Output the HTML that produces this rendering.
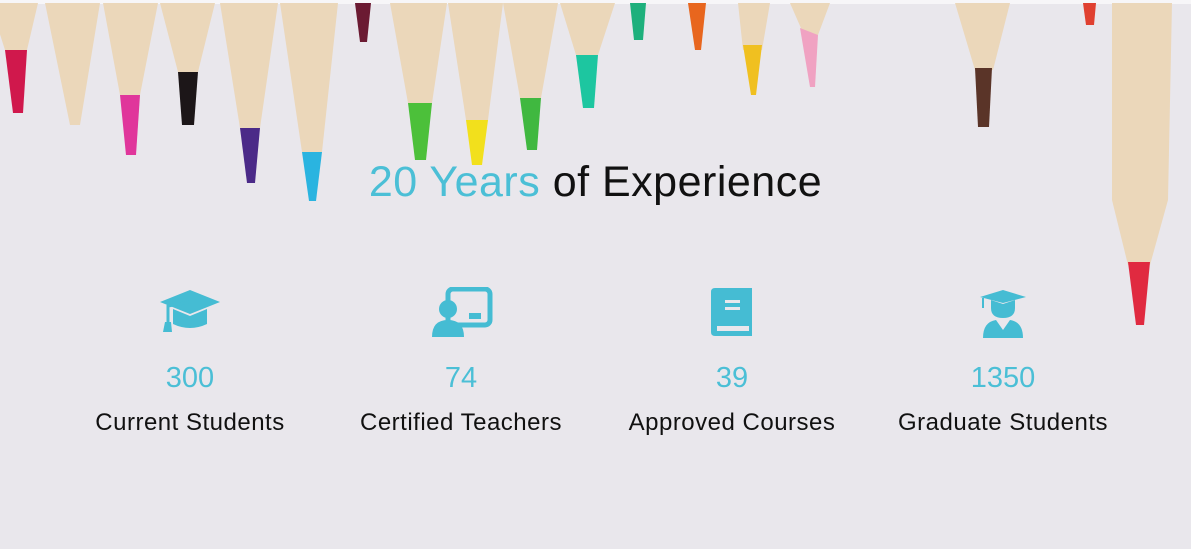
<!DOCTYPE html>
<html><head><meta charset="utf-8"><style>
html,body{margin:0;padding:0}
body{width:1191px;height:549px;background:#e9e7ec;position:relative;overflow:hidden;font-family:"Comic Sans MS","Liberation Sans",sans-serif}
svg.bg{position:absolute;left:0;top:0}
.title{position:absolute;top:158px;left:0;width:1191px;text-align:center;font-size:43px;color:#111;letter-spacing:0.5px}
.title span{color:#4bbfd6}
.col{position:absolute;width:260px;text-align:center}
.num{position:absolute;top:362px;font-size:29px;color:#4bbfd6}
.lab{position:absolute;top:409px;font-size:24px;color:#111;letter-spacing:0.5px}
.ic{position:absolute;top:286px}
</style></head><body>
<svg class="bg" width="1191" height="549" viewBox="0 0 1191 549">
<rect x="0" y="0" width="1191" height="4" fill="#f7f6f8"/>
<g fill="#ebd7ba">
<polygon points="-10,3 38,3 27,50 5,50"/>
<polygon points="45,3 100,3 80,125 70,125"/>
<polygon points="103,3 158,3 140,95 120,95"/>
<polygon points="160,3 215,3 198,72 178,72"/>
<polygon points="220,3 278,3 260,128 240,128"/>
<polygon points="280,3 338,3 322,152 302,152"/>
<polygon points="390,3 447,3 432,103 408,103"/>
<polygon points="448,3 503,3 488,120 466,120"/>
<polygon points="503,3 558,3 541,98 520,98"/>
<polygon points="560,3 615,3 598,55 576,55"/>
<polygon points="738,3 770,3 762,50 743,50"/>
<polygon points="790,3 830,3 818,35 804,35"/>
<polygon points="955,3 1010,3 993,70 975,70"/>
<polygon points="1112,3 1172,3 1168,200 1150,265 1128,265 1112,200"/>
</g>
<polygon points="5,50 27,50 23,113 13,113" fill="#d0184c"/>
<polygon points="120,95 140,95 136,155 126,155" fill="#e0369b"/>
<polygon points="178,72 198,72 194,125 182,125" fill="#1c1618"/>
<polygon points="240,128 260,128 255,183 247,183" fill="#4b2a88"/>
<polygon points="302,152 322,152 316,201 309,201" fill="#2ab4e0"/>
<polygon points="355,3 371,3 367,42 360,42" fill="#6b1a32"/>
<polygon points="408,103 432,103 426,160 415,160" fill="#4cc03a"/>
<polygon points="466,120 488,120 482,165 472,165" fill="#f2e01c"/>
<polygon points="520,98 541,98 537,150 527,150" fill="#40b840"/>
<polygon points="576,55 598,55 594,108 583,108" fill="#1dc6a0"/>
<polygon points="630,3 646,3 643,40 634,40" fill="#1eb07c"/>
<polygon points="688,3 706,3 701,50 695,50" fill="#e8661e"/>
<polygon points="743,45 762,45 756,95 751,95" fill="#f0c020"/>
<polygon points="800,28 818,35 815,87 810,87" fill="#f0a2c2"/>
<polygon points="975,68 992,68 989,127 978,127" fill="#5a3428"/>
<polygon points="1083,3 1096,3 1094,25 1086,25" fill="#e04030"/>
<polygon points="1128,262 1150,262 1144,325 1136,325" fill="#e02a40"/>
</svg>
<div class="title"><span>20 Years</span> of Experience</div>

<svg class="ic" style="left:160px" width="60" height="48" viewBox="0 0 60 48"><polygon points="30,4 60,16 30,28 0,16" fill="#45bcd3"/><path d="M13,23 L13,38 Q30,46 47,38 L47,23 L30,30 Z" fill="#45bcd3"/><path d="M30,16 L8,20 L8,36" stroke="#45bcd3" stroke-width="3" fill="none"/><polygon points="5,36 11,36 12,46 3,46" fill="#45bcd3"/></svg>
<svg class="ic" style="left:431px;top:287px" width="62" height="50" viewBox="0 0 62 50"><rect x="17" y="2" width="42" height="36" rx="5" fill="none" stroke="#45bcd3" stroke-width="5"/><rect x="38" y="26" width="12" height="6" fill="#45bcd3"/><circle cx="17" cy="22" r="9" fill="#45bcd3"/><path d="M1,50 Q1,33 17,33 Q33,33 33,50 Z" fill="#45bcd3"/></svg>
<svg class="ic" style="left:711px;top:288px" width="43" height="48" viewBox="0 0 43 48"><path d="M4,0 H41 V48 H4 Q0,48 0,44 V4 Q0,0 4,0 Z" fill="#45bcd3"/><rect x="6" y="38" width="32" height="5" fill="#e9e7ec"/><rect x="14" y="12" width="15" height="3" fill="#e9e7ec"/><rect x="14" y="19" width="15" height="3" fill="#e9e7ec"/></svg>
<svg class="ic" style="left:980px;top:290px" width="46" height="48" viewBox="0 0 46 48"><polygon points="23,0 46,7 23,13 0,7" fill="#45bcd3"/><path d="M11,10 L11,18 Q11,28 23,28 Q35,28 35,18 L35,10 L23,14 Z" fill="#45bcd3"/><rect x="2" y="8" width="2" height="10" fill="#45bcd3"/><path d="M3,48 Q3,32 16,30 L23,40 L30,30 Q43,32 43,48 Z" fill="#45bcd3"/></svg>

<div class="col num" style="left:60px">300</div>
<div class="col num" style="left:331px">74</div>
<div class="col num" style="left:602px">39</div>
<div class="col num" style="left:873px">1350</div>
<div class="col lab" style="left:60px">Current Students</div>
<div class="col lab" style="left:331px">Certified Teachers</div>
<div class="col lab" style="left:602px">Approved Courses</div>
<div class="col lab" style="left:873px">Graduate Students</div>
</body></html>
